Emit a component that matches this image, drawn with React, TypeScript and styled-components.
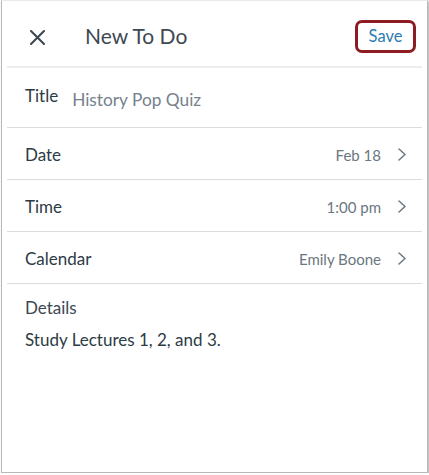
import styled, { createGlobalStyle } from "styled-components";

const GlobalStyle = createGlobalStyle`
  html, body {
    margin: 0;
    padding: 0;
    background: #ffffff;
  }
  body {
    font-family: "Lato", "Open Sans", sans-serif;
    color: #2d3b45;
  }
`;

const Frame = styled.div`
  box-sizing: border-box;
  width: 427px;
  height: 473px;
  margin-left: 1px;
  border: 1px solid #b9b9b9;
  border-top-color: #e9e9e9;
  box-shadow: 1px 1px 2px rgba(0, 0, 0, 0.35);
  background: #fff;
`;

const Sheet = styled.div`
  padding: 0 5px 0 5px;
`;

const Header = styled.header`
  display: flex;
  align-items: flex-start;
  height: 65px;
  padding: 0 6px 0 23px;
  border-bottom: 2px solid #ededed;
`;

const CloseButton = styled.button`
  display: flex;
  align-items: center;
  justify-content: center;
  width: 16px;
  height: 16px;
  padding: 0;
  margin: 28px 40px 0 -1px;
  border: none;
  background: none;
  color: #3a4650;
`;

const HeaderTitle = styled.h1`
  flex: 1;
  margin: 22px 0 0;
  font-size: 21px;
  line-height: 25px;
  font-weight: 400;
  color: #3d4852;
`;

const SaveButton = styled.button`
  box-sizing: border-box;
  width: 61px;
  height: 33px;
  margin-top: 19px;
  padding: 0 0 1px;
  border: 3px solid #8c1b22;
  border-radius: 7px;
  background: #fff;
  font-family: "Lato", sans-serif;
  font-size: 16.5px;
  color: #2c7bb3;
`;

const Row = styled.div<{ $height: number; $shift?: number }>`
  display: flex;
  align-items: center;
  box-sizing: border-box;
  height: ${(p) => p.$height}px;
  padding: ${(p) => p.$shift ?? 0}px 16px 0 18px;
  border-bottom: 1px solid #dcdcdc;
`;

const Label = styled.span<{ $lift?: number }>`
  font-size: 17px;
  color: #2d3b45;
  margin-bottom: ${(p) => p.$lift ?? 0}px;
`;

const TitleValue = styled.span`
  margin-left: 14px;
  margin-top: 3px;
  font-size: 17.3px;
  color: #75828c;
`;

const Value = styled.span`
  margin-left: auto;
  font-size: 15px;
  color: #6b7780;
`;

const Chevron = styled.svg`
  margin-left: 17px;
  flex-shrink: 0;
`;

const Details = styled.section`
  padding: 13px 18px 0;
`;

const DetailsLabel = styled.div`
  font-size: 17px;
  color: #3d4852;
`;

const DetailsText = styled.p`
  margin: 11px 0 0;
  font-size: 17px;
  color: #2d3b45;
`;

const pickers = [
  { label: "Date", value: "Feb 18" },
  { label: "Time", value: "1:00 pm" },
  { label: "Calendar", value: "Emily Boone" },
];

export default function App() {
  return (
    <>
      <GlobalStyle />
      <Frame>
        <Sheet>
          <Header>
            <CloseButton aria-label="Close">
              <svg width="15" height="15" viewBox="0 0 15 15">
                <path
                  d="M1 1 L14 14 M14 1 L1 14"
                  stroke="currentColor"
                  strokeWidth="2"
                  strokeLinecap="round"
                />
              </svg>
            </CloseButton>
            <HeaderTitle>New To Do</HeaderTitle>
            <SaveButton>Save</SaveButton>
          </Header>

          <Row $height={60}>
            <Label $lift={5}>Title</Label>
            <TitleValue>History Pop Quiz</TitleValue>
          </Row>

          {pickers.map((p) => (
            <Row key={p.label} $height={52} $shift={2}>
              <Label>{p.label}</Label>
              <Value>{p.value}</Value>
              <Chevron width="8" height="13" viewBox="0 0 8 13">
                <polyline
                  points="1,1 7,6.5 1,12"
                  fill="none"
                  stroke="#6b7780"
                  strokeWidth="1.5"
                  strokeLinecap="round"
                  strokeLinejoin="round"
                />
              </Chevron>
            </Row>
          ))}

          <Details>
            <DetailsLabel>Details</DetailsLabel>
            <DetailsText>Study Lectures 1, 2, and 3.</DetailsText>
          </Details>
        </Sheet>
      </Frame>
    </>
  );
}
